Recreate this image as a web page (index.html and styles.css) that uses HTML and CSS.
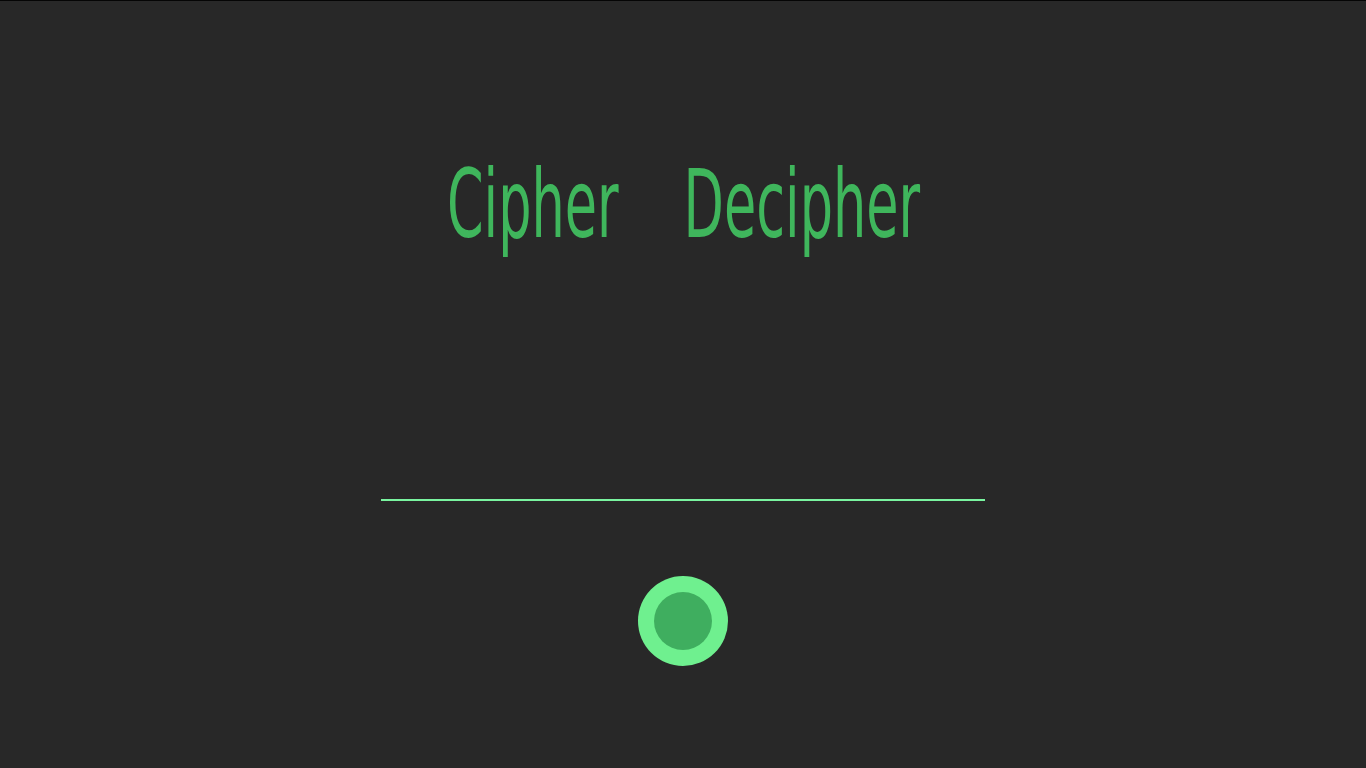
FILE: index.html
```html
<!DOCTYPE html>
<html>
<head>
<meta charset="utf-8">
<link rel="stylesheet" href="styles.css">
</head>
<body>
<main class="page">
  <div class="modes">
    <span class="mode">Cipher</span>
    <span class="mode">Decipher</span>
  </div>
  <div class="line"><input class="field" type="text" aria-label="text"></div>
  <button class="go" aria-label="run"><span class="dot"></span></button>
</main>
</body>
</html>
```
FILE: styles.css
```css
html, body {
  margin: 0;
  padding: 0;
  background: #282828;
  height: 100%;
}
body {
  border-top: 1px solid #050505;
  box-sizing: border-box;
}
.page {
  display: flex;
  flex-direction: column;
  align-items: center;
}
.modes {
  display: flex;
  gap: 105px;
  margin-top: 149px;
  height: 110px;
  align-items: flex-start;
  transform: scaleX(0.62);
  transform-origin: center;
}
.mode {
  font-family: "DejaVu Sans Condensed", "DejaVu Sans", sans-serif;
  font-stretch: condensed;
  font-size: 94px;
  line-height: 110px;
  color: #3fb65c;
}
.line {
  margin-top: 215px;
  width: 604px;
  border-bottom: 2px solid #7af5a0;
}
.field {
  display: block;
  width: 100%;
  height: 24px;
  box-sizing: border-box;
  padding: 0 4px;
  border: none;
  background: transparent;
  outline: none;
  color: #80e59c;
  font-family: "DejaVu Sans", sans-serif;
  font-size: 16px;
}
.go {
  margin-top: 75px;
  width: 90px;
  height: 90px;
  border-radius: 50%;
  border: none;
  background: #6ff08f;
  padding: 0;
  display: flex;
  align-items: center;
  justify-content: center;
}
.dot {
  width: 58px;
  height: 58px;
  border-radius: 50%;
  background: #3fae5f;
}
```
